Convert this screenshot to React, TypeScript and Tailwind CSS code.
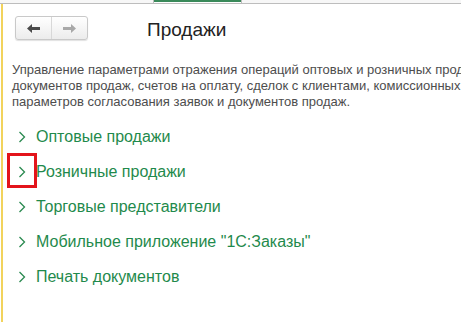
import React from "react";

const links = [
  "Оптовые продажи",
  "Розничные продажи",
  "Торговые представители",
  'Мобильное приложение "1С:Заказы"',
  "Печать документов",
];

function Chevron() {
  return (
    <svg width="8" height="12" viewBox="0 0 8 12" className="shrink-0">
      <path d="M1.5 1 L6.5 6 L1.5 11" fill="none" stroke="#2a8a50" strokeWidth="1.3" />
    </svg>
  );
}

export default function App() {
  return (
    <div
      className="w-[461px] h-[322px] bg-white overflow-hidden relative flex flex-col"
      style={{ fontFamily: '"Liberation Sans", Arial, sans-serif' }}
    >
      {/* top strip */}
      <div className="relative h-[4px] shrink-0 border-b border-[#bdbdbd] bg-[#f7f7f7]">
        <div className="absolute left-[153px] top-0 w-[89px] h-[3px] border-x border-[#bdbdbd] bg-white">
          <div className="h-[2px] bg-[#3a8a5a]" />
        </div>
      </div>
      <div className="flex flex-1 min-h-0">
        <div className="w-[1px] shrink-0" />
        <div className="w-[2px] shrink-0 bg-[#f2d35c]" />
        <div className="flex-1 min-w-0 flex flex-col">
          {/* header */}
          <div className="flex items-center mt-[12px] ml-[12px] h-[24px]">
            <div className="flex h-[24px] w-[73px] rounded-[3px] border border-[#c9c9c9] bg-gradient-to-b from-white to-[#ececec] shadow-[0_1px_1px_rgba(0,0,0,0.12)]">
              <div className="flex-1 flex items-center justify-center border-r border-[#d8d8d8]">
                <svg width="13" height="9" viewBox="0 0 13 9">
                  <path d="M0 4.5 L5 0 L5 3 L13 3 L13 6 L5 6 L5 9 Z" fill="#4a4a4a" />
                </svg>
              </div>
              <div className="flex-1 flex items-center justify-center">
                <svg width="13" height="9" viewBox="0 0 13 9">
                  <path d="M13 4.5 L8 0 L8 3 L0 3 L0 6 L8 6 L8 9 Z" fill="#a8a8a8" />
                </svg>
              </div>
            </div>
            <div className="ml-[59px] mt-[4px] text-[19px] leading-[24px] text-[#222]">Продажи</div>
          </div>
          {/* description */}
          <div className="mt-[22px] ml-[9px] text-[13px] leading-[16px] text-[#4d4d4d] whitespace-nowrap">
            <div>Управление параметрами отражения операций оптовых и розничных продаж,</div>
            <div>документов продаж, счетов на оплату, сделок с клиентами, комиссионных продаж,</div>
            <div>параметров согласования заявок и документов продаж.</div>
          </div>
          {/* links */}
          <div className="mt-[9px] flex flex-col">
            {links.map((l, i) => (
              <div key={l} className="relative flex items-center h-[35px] pl-[15px]">
                <Chevron />
                <span className="ml-[10px] text-[16px] text-[#1f8a4c] whitespace-nowrap">{l}</span>
                {i === 1 && (
                  <div className="absolute left-[4px] top-[-1px] w-[30px] h-[35px] border-[3px] border-[#e3141b]" />
                )}
              </div>
            ))}
          </div>
        </div>
      </div>
    </div>
  );
}
